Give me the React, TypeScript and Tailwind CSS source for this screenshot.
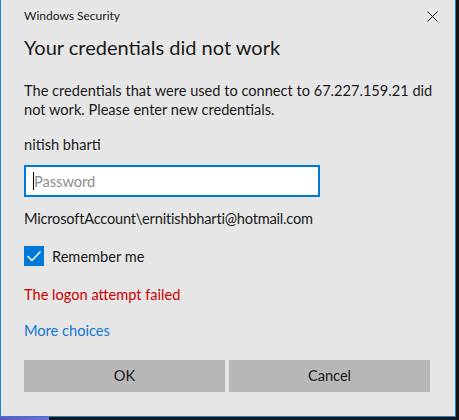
const FONT = "font-['Lato','Noto_Sans',sans-serif]";

export default function App() {
  return (
    <div className={`w-[459px] h-[420px] bg-[#151515] flex flex-col ${FONT}`}>
      <div className="w-[456px] h-[417px] bg-[#e6e6e6] border-l border-r border-b border-[#1883d7] flex flex-col text-[#000]">
        {/* title bar */}
        <div className="h-[32px] flex items-center justify-between">
          <span className="pl-[23px] text-[12px] leading-[16px] text-[#1a1a1a]">
            Windows Security
          </span>
          <button className="w-[46px] h-[32px] flex items-center justify-center text-[#1a1a1a]">
            <svg width="11" height="11" viewBox="0 0 11 11">
              <path d="M0.5 0.5 L10.5 10.5 M10.5 0.5 L0.5 10.5" stroke="currentColor" strokeWidth="1" />
            </svg>
          </button>
        </div>

        <div className="px-[23px] flex flex-col">
          <h1 className="mt-[1px] text-[20px] leading-[28px] text-[#1a1a1a]">
            Your credentials did not work
          </h1>

          <p className="mt-[20px] text-[14.6px] leading-[19px] text-[#1a1a1a] whitespace-nowrap">
            The credentials that were used to connect to 67.227.159.21 did
            <br />
            not work. Please enter new credentials.
          </p>

          <p className="mt-[16px] text-[14.6px] leading-[19px] text-[#1a1a1a]">
            nitish bharti
          </p>

          <div className="mt-[11px] w-[296px] h-[32px] bg-white border-2 border-[#0078d7] flex items-center pl-[7px]">
            <span className="w-px h-[18px] bg-black" />
            <span className="text-[14.6px] leading-[19px] text-[#8c8c8c]">Password</span>
          </div>

          <p className="mt-[12px] text-[14.6px] leading-[19px] text-[#1a1a1a] tracking-[-0.2px]">
            MicrosoftAccount\ernitishbharti@hotmail.com
          </p>

          <div className="mt-[18px] flex items-center gap-[8px] h-[20px]">
            <div className="w-[20px] h-[20px] bg-[#0078d7] flex items-center justify-center">
              <svg width="20" height="20" viewBox="0 0 20 20">
                <polyline
                  points="3.5,10 8,14.5 16.5,5.5"
                  fill="none"
                  stroke="white"
                  strokeWidth="1.5"
                />
              </svg>
            </div>
            <span className="text-[14.6px] leading-[19px] text-[#1a1a1a]">Remember me</span>
          </div>

          <p className="mt-[19px] text-[14.6px] leading-[19px] text-[#c80000]">
            The logon attempt failed
          </p>

          <a className="mt-[17px] text-[14.6px] leading-[19px] text-[#0f78d4] self-start">
            More choices
          </a>

          <div className="mt-[20px] flex gap-[4px]">
            <button className="w-[201px] h-[32px] bg-[#b7b7b7] text-[14.6px] text-[#1a1a1a]">
              OK
            </button>
            <button className="w-[201px] h-[32px] bg-[#b7b7b7] text-[14.6px] text-[#1a1a1a]">
              Cancel
            </button>
          </div>
        </div>
      </div>
      <div className="flex-1 flex">
        <div className="w-[49px] bg-gradient-to-r from-[#6a52b5] to-[#7f6ad6]" />
      </div>
    </div>
  );
}
